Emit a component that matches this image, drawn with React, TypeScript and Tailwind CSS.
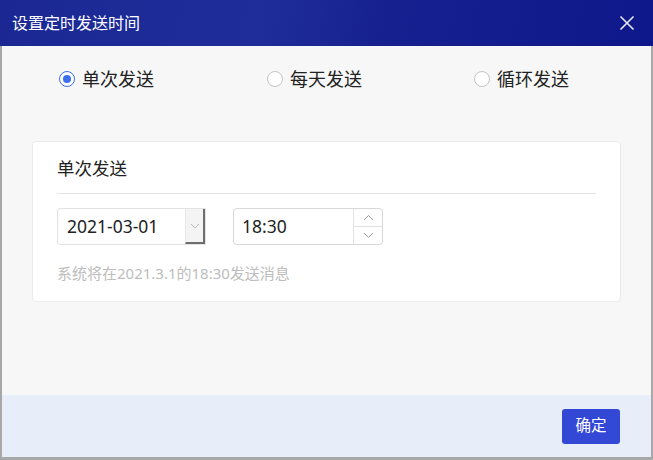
import React from "react";

const font = { fontFamily: '"Noto Sans", "Noto Sans CJK SC", sans-serif' };

function Radio({ checked, label }: { checked?: boolean; label: string }) {
  return (
    <div className="flex items-center gap-[7px]">
      <div
        className={
          checked
            ? "w-[16px] h-[16px] rounded-full border border-[#3b6ff0] bg-white flex items-center justify-center"
            : "w-[16px] h-[16px] rounded-full border border-[#c4c4c4] bg-white"
        }
      >
        {checked && <div className="w-[8px] h-[8px] rounded-full bg-[#3b6ff0]" />}
      </div>
      <span className="text-[18px] text-[#222] leading-none">{label}</span>
    </div>
  );
}

export default function App() {
  return (
    <div className="w-[653px] h-[460px] flex flex-col overflow-hidden" style={font}>
      <div className="h-[46px] flex items-center justify-between pl-[12px] pr-[16px] bg-[linear-gradient(100deg,#1b2894_0%,#1e2d9a_40%,#16208f_60%,#0f188a_100%)]">
        <span className="text-white text-[16px] leading-none">设置定时发送时间</span>
        <svg width="16" height="16" viewBox="0 0 16 16" className="mr-[2px]">
          <path d="M1.5 1.5 L14.5 14.5 M14.5 1.5 L1.5 14.5" stroke="#e8eaf6" strokeWidth="1.6" />
        </svg>
      </div>
      <div className="flex-1 flex flex-col border-l-2 border-r-2 border-b-[3px] border-[#a8a8a8]">
        <div className="flex-1 bg-[#f7f7f7] flex flex-col px-[30px]">
          <div className="flex h-[64px] items-center pl-[27px] pt-[1px]">
            <div className="w-[208px]">
              <Radio checked label="单次发送" />
            </div>
            <div className="w-[207px]">
              <Radio label="每天发送" />
            </div>
            <Radio label="循环发送" />
          </div>
          <div className="mt-[31px] h-[161px] bg-white border border-[#ebebeb] rounded-[4px] px-[24px]">
            <div className="h-[52px] flex items-end pb-[16px] border-b border-[#e4e4e4]">
              <span className="text-[17.5px] text-[#222] leading-none">单次发送</span>
            </div>
            <div className="flex gap-[27px] mt-[14px]">
              <div className="w-[149px] h-[37px] border border-[#e2e2e2] rounded-l-[3px] flex items-stretch">
                <div className="flex-1 flex items-center pl-[9px] text-[17.5px] text-[#222]">2021-03-01</div>
                <div className="w-[20px] bg-[#f4f4f4] border-r-2 border-b-2 border-r-[#6e6e6e] border-b-[#6e6e6e] border-l border-l-[#e8e8e8] flex items-center justify-center">
                  <svg width="10" height="6" viewBox="0 0 10 6">
                    <path d="M1 1 L5 5 L9 1" stroke="#b8b8b8" strokeWidth="1" fill="none" />
                  </svg>
                </div>
              </div>
              <div className="w-[150px] h-[37px] border border-[#d8d8d8] rounded-[4px] flex items-stretch">
                <div className="flex-1 flex items-center pl-[8px] text-[17.5px] text-[#222]">18:30</div>
                <div className="w-[29px] border-l border-[#e2e2e2] flex flex-col">
                  <div className="flex-1 flex items-center justify-center border-b border-[#e2e2e2]">
                    <svg width="11" height="7" viewBox="0 0 11 7">
                      <path d="M1 6 L5.5 1.5 L10 6" stroke="#9a9a9a" strokeWidth="1" fill="none" />
                    </svg>
                  </div>
                  <div className="flex-1 flex items-center justify-center">
                    <svg width="11" height="7" viewBox="0 0 11 7">
                      <path d="M1 1 L5.5 5.5 L10 1" stroke="#9a9a9a" strokeWidth="1" fill="none" />
                    </svg>
                  </div>
                </div>
              </div>
            </div>
            <div className="mt-[21px] text-[15px] text-[#bdbdbd] leading-none">系统将在2021.3.1的18:30发送消息</div>
          </div>
        </div>
        <div className="h-[62px] bg-[#e8eef9] flex items-center justify-end pr-[31px]">
          <button className="w-[58px] h-[35px] bg-[#3448d6] rounded-[3px] text-white text-[15.5px] leading-none">确定</button>
        </div>
      </div>
    </div>
  );
}
